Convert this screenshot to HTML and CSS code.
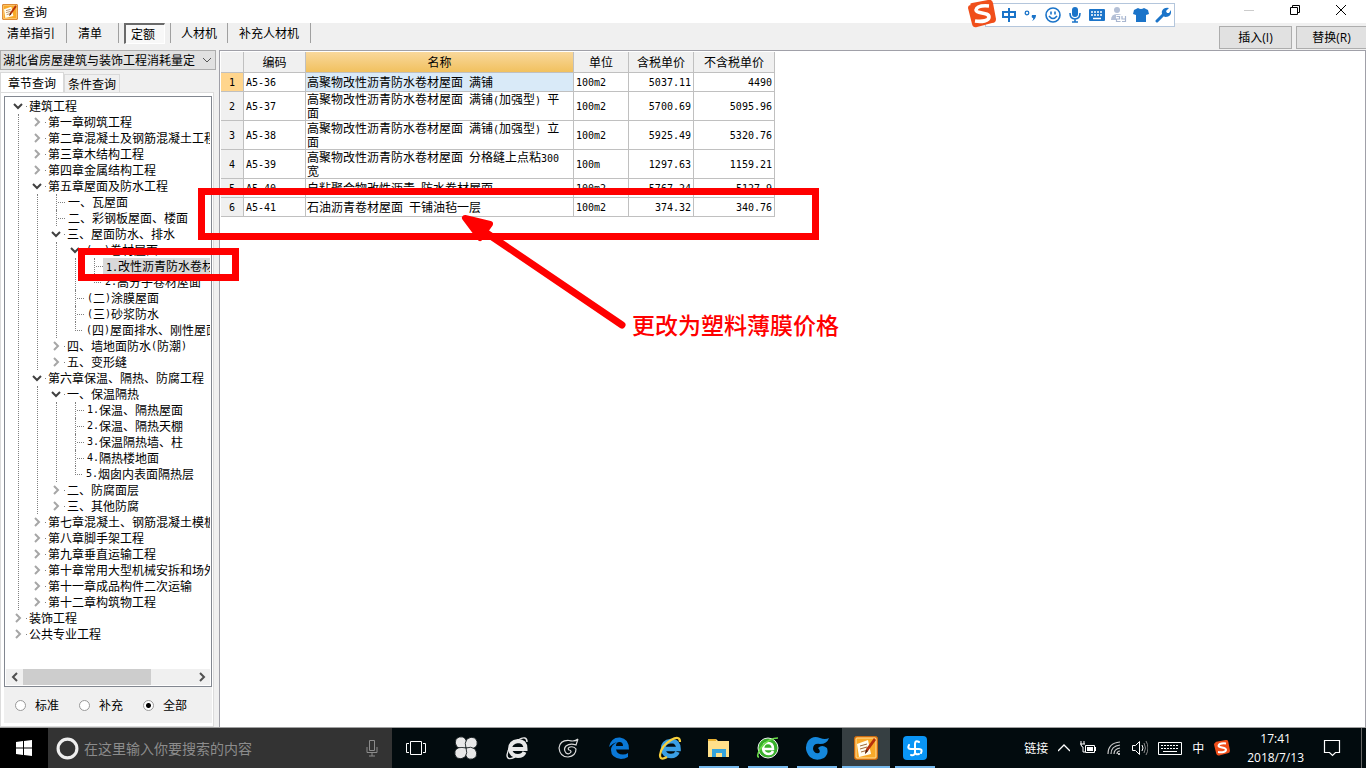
FILE: index.html
```html
<!DOCTYPE html>
<html lang="zh-CN">
<head>
<meta charset="utf-8">
<title>查询</title>
<link rel="stylesheet" href="styles.css">
</head>
<body>
<svg class="defs" aria-hidden="true">
  <symbol id="chev-down" viewBox="0 0 10 10"><path d="M1 3l4 4 4-4" fill="none" stroke="#404040" stroke-width="2"/></symbol>
  <symbol id="chev-right" viewBox="0 0 10 10"><path d="M3 1l4 4-4 4" fill="none" stroke="#a6a6a6" stroke-width="2"/></symbol>
  <symbol id="note" viewBox="0 0 24 24">
    <rect x=".5" y=".5" width="23" height="23" rx="2" fill="#e87f10" stroke="#c86a10"/>
    <rect x="2" y="2" width="20" height="20" rx="1" fill="#f9a928" stroke="#ffe09a"/>
    <path d="M3 8l11-4 3 14-12 3z" fill="#fffdf0"/>
    <path d="M6 10l7-2M6 13l7-2M7 16l7-2" stroke="#a06a3a" stroke-width="1"/>
    <path d="M20 2l2 2-8 11-3 3 1-5z" fill="#b5300c"/><path d="M11 18l1-4 2 1z" fill="#40200a"/>
  </symbol>
  <symbol id="sogou" viewBox="0 0 28 28">
    <path d="M3 5Q1 4 4 3L20 0q4-1 5 3l3 16q0 4-4 4L9 27q-4 1-5-3L0 8q0-3 3-3z" fill="#f04e1a"/>
    <path d="M21 6Q9 5 8 10c0 4 13 2 13 7 0 4-7 5-14 4" fill="none" stroke="#fff" stroke-width="3.6"/>
  </symbol>
</svg>

<header class="titlebar">
  <svg class="app-icon"><use href="#note"/></svg>
  <h1>查询</h1>
  <div class="window-buttons">
    <button aria-label="最小化"><svg viewBox="0 0 12 12"><path d="M1 6.500h10" stroke="#ccc"/></svg></button>
    <button aria-label="还原"><svg viewBox="0 0 12 12"><path d="M1.500 3.500h7v7h-7zM3.500 3V1.500h7v7H9" fill="none" stroke="#000"/></svg></button>
    <button aria-label="关闭"><svg viewBox="0 0 12 12"><path d="M1 1l10 10M11 1L1 11" stroke="#000"/></svg></button>
  </div>
</header>

<div class="ime" role="toolbar" aria-label="输入法">
  <svg class="ime-logo"><use href="#sogou"/></svg>
  <button aria-label="中文"><svg viewBox="0 0 16 16"><path d="M2 5h12v5H2zM8 1v14" fill="none" stroke="#1b74c9" stroke-width="2"/></svg></button>
  <button aria-label="标点"><svg viewBox="0 0 16 16"><circle cx="4" cy="6" r="1.800" fill="none" stroke="#1b74c9" stroke-width="1.300"/><path d="M9 8h4q0 4-4 6 2-2 1-3-2 0-1-3z" fill="#1b74c9"/></svg></button>
  <button aria-label="表情"><svg viewBox="0 0 16 16"><circle cx="8" cy="8" r="7" fill="none" stroke="#1b74c9" stroke-width="1.600"/><path d="M6 4.500v3M10 4.500v3M4 9q4 5 8 0" fill="none" stroke="#1b74c9" stroke-width="1.600"/></svg></button>
  <button aria-label="语音"><svg viewBox="0 0 16 16"><rect x="5" y="0" width="6" height="10" rx="3" fill="#1b74c9"/><path d="M3 6q0 6 5 6t5-6M8 12v3M5 15h6" fill="none" stroke="#1b74c9" stroke-width="1.600"/></svg></button>
  <button aria-label="软键盘"><svg viewBox="0 0 16 16"><rect y="2" width="16" height="12" rx="1" fill="#1b74c9"/><path d="M2 5h12M2 8h12" stroke="#fff" stroke-width="1.600" stroke-dasharray="2 1"/><path d="M4 11.500h8" stroke="#fff" stroke-width="1.500"/></svg></button>
  <button aria-label="账号"><svg viewBox="0 0 16 16"><circle cx="6" cy="3" r="3" fill="#b4c0d6"/><path d="M0 13q0-6 6-6 5 0 6 3v3z" fill="#b4c0d6"/><rect x="5" y="8" width="11" height="8" fill="#fff"/><path d="M5.500 9.500h3v2.500h-3v2.500h4M11 9v3h3.500V9v5.500H11" fill="none" stroke="#a8b6d0" stroke-width="1.200"/></svg></button>
  <button aria-label="皮肤"><svg viewBox="0 0 16 16"><path d="M5 1q3 2 6 0l4 2 1 4-3 1v7H3V8L0 7l1-4z" fill="#1b74c9"/></svg></button>
  <button aria-label="工具"><svg viewBox="0 0 16 16"><path d="M2 14l7-7" stroke="#1b74c9" stroke-width="3" stroke-linecap="round"/><path d="M14 1l-3 3 1 2 2 0 2-3q1 7-6 7-4-2-3-6 2-4 7-3z" fill="#1b74c9"/></svg></button>
</div>

<nav class="toolbar">
  <button>清单指引</button>
  <button class="list">清单</button>
  <button class="pressed" aria-pressed="true">定额</button>
  <button>人材机</button>
  <button>补充人材机</button>
  <div class="actions">
    <button>插入<span class="latin">(I)</span></button>
    <button>替换<span class="latin">(R)</span></button>
  </div>
</nav>

<main>
  <aside>
    <div class="library">
      <select aria-label="定额库"><option>湖北省房屋建筑与装饰工程消耗量定</option></select>
      <svg viewBox="0 0 10 10"><path d="M1 3l4 4 4-4" fill="none" stroke="#555"/></svg>
    </div>
    <div class="tabs" role="tablist">
      <button role="tab" aria-selected="true" class="active">章节查询</button>
      <button role="tab" aria-selected="false">条件查询</button>
    </div>
    <div class="tab-page">
      <div class="tree-box">
        <ul class="tree">
          <li><div class="row"><svg><use href="#chev-down"/></svg>建筑工程</div>
            <ul>
              <li><div class="row"><svg><use href="#chev-right"/></svg>第一章砌筑工程</div></li>
              <li><div class="row"><svg><use href="#chev-right"/></svg>第二章混凝土及钢筋混凝土工程</div></li>
              <li><div class="row"><svg><use href="#chev-right"/></svg>第三章木结构工程</div></li>
              <li><div class="row"><svg><use href="#chev-right"/></svg>第四章金属结构工程</div></li>
              <li><div class="row"><svg><use href="#chev-down"/></svg>第五章屋面及防水工程</div>
                <ul>
                  <li><div class="row leaf">一、瓦屋面</div></li>
                  <li><div class="row leaf">二、彩钢板屋面、楼面</div></li>
                  <li><div class="row"><svg><use href="#chev-down"/></svg>三、屋面防水、排水</div>
                    <ul>
                      <li><div class="row"><svg><use href="#chev-down"/></svg><span class="m">(</span>一<span class="m">)</span>卷材屋面</div>
                        <ul>
                          <li><div class="row leaf selected"><span class="label"><span class="m">1.</span>改性沥青防水卷材</span></div></li>
                          <li><div class="row leaf"><span class="m">2.</span>高分子卷材屋面</div></li>
                        </ul>
                      </li>
                      <li><div class="row leaf"><span class="m">(</span>二<span class="m">)</span>涂膜屋面</div></li>
                      <li><div class="row leaf"><span class="m">(</span>三<span class="m">)</span>砂浆防水</div></li>
                      <li><div class="row leaf"><span class="m">(</span>四<span class="m">)</span>屋面排水、刚性屋面</div></li>
                    </ul>
                  </li>
                  <li><div class="row"><svg><use href="#chev-right"/></svg>四、墙地面防水<span class="m">(</span>防潮<span class="m">)</span></div></li>
                  <li><div class="row"><svg><use href="#chev-right"/></svg>五、变形缝</div></li>
                </ul>
              </li>
              <li><div class="row"><svg><use href="#chev-down"/></svg>第六章保温、隔热、防腐工程</div>
                <ul>
                  <li><div class="row"><svg><use href="#chev-down"/></svg>一、保温隔热</div>
                    <ul>
                      <li><div class="row leaf"><span class="m">1.</span>保温、隔热屋面</div></li>
                      <li><div class="row leaf"><span class="m">2.</span>保温、隔热天棚</div></li>
                      <li><div class="row leaf"><span class="m">3.</span>保温隔热墙、柱</div></li>
                      <li><div class="row leaf"><span class="m">4.</span>隔热楼地面</div></li>
                      <li><div class="row leaf"><span class="m">5.</span>烟囱内表面隔热层</div></li>
                    </ul>
                  </li>
                  <li><div class="row"><svg><use href="#chev-right"/></svg>二、防腐面层</div></li>
                  <li><div class="row"><svg><use href="#chev-right"/></svg>三、其他防腐</div></li>
                </ul>
              </li>
              <li><div class="row"><svg><use href="#chev-right"/></svg>第七章混凝土、钢筋混凝土模板</div></li>
              <li><div class="row"><svg><use href="#chev-right"/></svg>第八章脚手架工程</div></li>
              <li><div class="row"><svg><use href="#chev-right"/></svg>第九章垂直运输工程</div></li>
              <li><div class="row"><svg><use href="#chev-right"/></svg>第十章常用大型机械安拆和场外</div></li>
              <li><div class="row"><svg><use href="#chev-right"/></svg>第十一章成品构件二次运输</div></li>
              <li><div class="row"><svg><use href="#chev-right"/></svg>第十二章构筑物工程</div></li>
            </ul>
          </li>
          <li><div class="row"><svg><use href="#chev-right"/></svg>装饰工程</div></li>
          <li><div class="row"><svg><use href="#chev-right"/></svg>公共专业工程</div></li>
        </ul>
        <div class="scrollbar">
          <button aria-label="向左"><svg viewBox="0 0 10 10"><path d="M7 1L3 5l4 4" fill="none" stroke="#505050" stroke-width="2"/></svg></button>
          <div class="track"><div class="thumb"></div></div>
          <button aria-label="向右"><svg viewBox="0 0 10 10"><path d="M3 1l4 4-4 4" fill="none" stroke="#505050" stroke-width="2"/></svg></button>
        </div>
      </div>
      <div class="radios">
        <label><input type="radio" name="scope">标准</label>
        <label><input type="radio" name="scope">补充</label>
        <label><input type="radio" name="scope" checked>全部</label>
      </div>
    </div>
  </aside>

  <section class="results">
    <table>
      <colgroup><col class="c-index"><col class="c-code"><col class="c-name"><col class="c-unit"><col class="c-tax"><col class="c-net"></colgroup>
      <thead>
        <tr><th></th><th>编码</th><th class="current">名称</th><th>单位</th><th>含税单价</th><th>不含税单价</th></tr>
      </thead>
      <tbody>
        <tr class="current"><th>1</th><td>A5-36</td><td class="name">高聚物改性沥青防水卷材屋面<span class="m"> </span>满铺</td><td>100m2</td><td class="num">5037.11</td><td class="num">4490</td></tr>
        <tr><th>2</th><td>A5-37</td><td class="name">高聚物改性沥青防水卷材屋面<span class="m"> </span>满铺<span class="m">(</span>加强型<span class="m">) </span>平<br>面</td><td>100m2</td><td class="num">5700.69</td><td class="num">5095.96</td></tr>
        <tr><th>3</th><td>A5-38</td><td class="name">高聚物改性沥青防水卷材屋面<span class="m"> </span>满铺<span class="m">(</span>加强型<span class="m">) </span>立<br>面</td><td>100m2</td><td class="num">5925.49</td><td class="num">5320.76</td></tr>
        <tr><th>4</th><td>A5-39</td><td class="name">高聚物改性沥青防水卷材屋面<span class="m"> </span>分格缝上点粘<span class="m">300</span><br>宽</td><td>100m</td><td class="num">1297.63</td><td class="num">1159.21</td></tr>
        <tr><th>5</th><td>A5-40</td><td class="name">自粘聚合物改性沥青<span class="m"> </span>防水卷材屋面</td><td>100m2</td><td class="num">5767.24</td><td class="num">5127.9</td></tr>
        <tr><th>6</th><td>A5-41</td><td class="name">石油沥青卷材屋面<span class="m"> </span>干铺油毡一层</td><td>100m2</td><td class="num">374.32</td><td class="num">340.76</td></tr>
      </tbody>
    </table>
  </section>
</main>

<footer class="taskbar">
  <button class="start" aria-label="开始"><svg viewBox="0 0 16 16"><path d="M0 2l7-1v6.500H0zM8 1l8-1v7.500H8zM0 8.500h7V15l-7-1zM8 8.500h8V16l-8-1z" fill="#fff"/></svg></button>
  <div class="search">
    <svg class="cortana" viewBox="0 0 22 22"><circle cx="11" cy="11" r="9" fill="none" stroke="#eee" stroke-width="3"/></svg>
    <input type="text" placeholder="在这里输入你要搜索的内容" aria-label="搜索">
    <svg class="mic" viewBox="0 0 12 18"><path d="M3.500 1.500h5v10h-5zM1 8v5.500h10V8M6 14v3M3 17h6" fill="none" stroke="#8c8c8c"/></svg>
  </div>
  <div class="pinned">
    <button aria-label="任务视图"><svg viewBox="0 0 24 24"><path d="M6.500 5.500h11v13h-11zM5 7.500H2.500v9H5M19 7.500h2.500v9H19" fill="none" stroke="#fff"/></svg></button>
    <button aria-label="四叶"><svg viewBox="0 0 24 24"><g fill="#e8e8e8" stroke="#020a0c" stroke-width=".8"><path id="petal" d="M12 12Q7 14 3 11 0 7 2 3 5 0 9 1 14 3 12 12z"/><use href="#petal" transform="rotate(90 12 12)"/><use href="#petal" transform="rotate(180 12 12)"/><use href="#petal" transform="rotate(270 12 12)"/></g></svg></button>
    <button aria-label="浏览器"><svg viewBox="0 0 24 24"><path d="M5 13h15.500q0-8-7.500-8-8 1-8 8 1 7 8 7 5 0 6.500-4" fill="none" stroke="#e8e8e8" stroke-width="4"/><path d="M22 6q0-7-9-2Q3 10 2 19q0 6 8 2" fill="none" stroke="#e8e8e8" stroke-width="1.400"/></svg></button>
    <button aria-label="旋风"><svg viewBox="0 0 24 24"><path d="M22 3q-3 3-9 1.500Q4 4 3 12q1 9 9 9 8-1 8-8-2-3-6-2-3 1-1 3 2 0 2 2-2 3-5 1-3-4 0-7 4-3 10-1 1-3 2-6" fill="none" stroke="#ddd" stroke-width="1.200"/></svg></button>
    <button aria-label="Edge"><svg viewBox="0 0 24 24"><path d="M2 11Q4 1 13 1.500q9 1 9 12H9q1 5 7 5 3 0 5-1.500v4q-3 2-7 2-10-1-10-9 0-5 6-8-4 1-8 5zm7-1h7q0-4-3.500-4T9 10z" fill="#0a78d7"/></svg></button>
    <button aria-label="IE"><svg viewBox="0 0 24 24"><path d="M5 13h15.500q0-8-7.500-8-8 1-8 8 1 7 8 7 5 0 6.500-4" fill="none" stroke="#3a9fe4" stroke-width="4.600"/><path d="M22 6q0-7-9-2Q3 10 2 19q0 6 7 2" fill="none" stroke="#f8cf3a" stroke-width="2.200"/></svg></button>
  </div>
  <div class="running">
    <button aria-label="文件管理器"><svg viewBox="0 0 24 24"><path d="M1 3h8l2 2h11v16H1z" fill="#ffe08a"/><path d="M1 3h8v2H1z" fill="#e8b030"/><path d="M5 21v-8h14v8h-4v-4H9v4z" fill="#35a4dc"/></svg></button>
    <button aria-label="安全浏览器"><svg viewBox="0 0 24 24"><circle cx="12" cy="12" r="10" fill="#38b02c" stroke="#eee"/><path d="M7 13h10q0-6-5-6t-5 6q1 5 6 5 3 0 4-3" fill="none" stroke="#fff" stroke-width="2.500"/><path d="M22 2Q12 2 4 13q-4 8-1 8" fill="none" stroke="#6adf4a" stroke-width="1.600"/></svg></button>
    <button aria-label="广联达"><svg viewBox="0 0 24 24"><path d="M24 2q-2 6-9 6-7-1-7 5 1 5 6 4 2-2-1-5 4-4 9 0 2 6-3 10-8 4-14-1Q-2 13 3 5 8-1 15 2q5 2 9 0z" fill="#1588dc"/></svg></button>
    <button aria-label="查询" class="active"><svg><use href="#note"/></svg></button>
    <button aria-label="工具箱"><svg viewBox="0 0 24 24"><rect width="24" height="24" rx="4" fill="#0a95f5"/><path d="M16 6q-4-2-4 2v8q0 4-4 3M6 9q-2 4 2 4h8q4 0 2 4M12 16q0 3 4 2" fill="none" stroke="#fff" stroke-width="2" stroke-linecap="round"/></svg></button>
  </div>
  <div class="tray">
    <span>链接</span>
    <svg class="s12" viewBox="0 0 12 12"><path d="M0 9l6-6 6 6" fill="none" stroke="#fff" stroke-width="1.300"/></svg>
    <svg class="s16" viewBox="0 0 16 16"><path d="M5.500 5.500h9v7h-9zM15.500 7v4M0 4h5M1 1v3M4 1v3M1 4q0 3 2 3v5h2" fill="none" stroke="#fff"/><path d="M7 7h6v4H7z" fill="#fff"/></svg>
    <svg class="s16" viewBox="0 0 16 16"><path d="M2 14Q2 3 14 2M5 14q0-8 9-9M8 14q0-5 6-6M11 14q0-3 3-3" fill="none" stroke="#ccc" stroke-width="1.200"/><circle cx="13" cy="14" r="1" fill="#fff"/></svg>
    <svg class="s16" viewBox="0 0 16 16"><path d="M.5 5.500h3l4-4v13l-4-4h-3zM10 5q2 3 0 6" fill="none" stroke="#fff"/><path d="M12 3q3 5 0 10M14 1q4 7 0 14" fill="none" stroke="#888"/></svg>
    <svg class="s24" viewBox="0 0 24 16"><path d="M.5 2.500h23v12H.5z" fill="none" stroke="#fff"/><path d="M3 5.500h18M3 8.500h18" stroke="#fff" stroke-dasharray="2 1"/><path d="M5 11.500h14" stroke="#fff"/></svg>
    <span>中</span>
    <svg class="s16"><use href="#sogou"/></svg>
    <time>17:41<br>2018/7/13</time>
    <svg class="s18" viewBox="0 0 18 18"><path d="M1.500 1.500h15v12h-4l-3 3-3-3h-5z" fill="none" stroke="#fff" stroke-width="1.200"/></svg>
  </div>
</footer>

<svg class="markup" role="img" aria-label="批注">
  <g fill="none" stroke="#f00" stroke-width="7">
    <rect x="201.500" y="191.500" width="614" height="45"/>
    <rect x="81.500" y="251.500" width="154" height="26"/>
    <path d="M482 230L622 325" stroke-linecap="round"/>
  </g>
  <path d="M465 218L490 224 480 238z" fill="#f00" stroke="#f00" stroke-width="6" stroke-linejoin="round"/>
</svg>
<p class="remark">更改为塑料薄膜价格</p>
</body>
</html>
```

FILE: styles.css
```css
* { box-sizing: border-box; }
body {
  margin: 0;
  height: 100vh;
  display: flex;
  flex-direction: column;
  overflow: hidden;
  position: relative;
  background: #f0f0f0;
  color: #000;
  font: 12px/16px "Noto Sans CJK SC", sans-serif;
}
button, input, select { font: inherit; color: inherit; margin: 0; padding: 0; border: 0; background: none; }
ul { list-style: none; margin: 0; padding: 0; }
.defs { position: absolute; width: 0; height: 0; }
.m { font: 10px/1 "DejaVu Sans Mono", monospace; white-space: pre; }

/* Title bar */
.titlebar { display: flex; align-items: center; height: 23px; flex: none; padding-left: 2px; gap: 5px; background: #fff; }
.titlebar h1 { margin: 0; font-size: 12px; font-weight: 400; }
.app-icon { width: 16px; height: 16px; }
.window-buttons { margin-left: auto; display: flex; align-self: flex-start; padding-right: 2px; }
.window-buttons button { width: 46px; height: 20px; display: grid; place-items: center; }
.window-buttons svg { width: 12px; height: 12px; }

.ime {
  position: absolute; z-index: 2; top: 3px; right: 191px;
  display: flex; align-items: center; height: 24px; padding: 0 0 0 12px;
  background: #fff; border: 1px solid #b4c6dc;
}
.ime-logo { position: absolute; left: -18px; top: -4px; width: 28px; height: 28px; }
.ime button { width: 22px; height: 22px; display: grid; place-items: center; }
.ime button svg { width: 16px; height: 16px; }

/* Toolbar */
.toolbar { display: flex; flex: none; height: 27px; align-items: flex-start; }
.toolbar > button { height: 20px; padding: 0 11px; border-right: 1px solid #a0a0a0; }
.toolbar > button:first-child { padding-left: 7px; }
.toolbar > .list { padding-right: 16px; }
.toolbar > .pressed {
  margin: 0 5px; padding: 0 9px 0 5px; height: 21px;
  background: #f8f8f8; border: 1px solid #fff; border-top: 2px solid #6a6a6a; border-left: 2px solid #6a6a6a;
}
.toolbar > .pressed + button { border-left: 1px solid #a0a0a0; padding: 0 10px; }
.actions { display: flex; gap: 4px; margin-left: auto; padding-top: 3px; }
.actions button { width: 73px; height: 23px; background: #e1e1e1; border: 1px solid #adadad; }
.actions button:last-child { width: 70px; border-right: 0; }
.latin { font-family: "Open Sans", sans-serif; }

main { flex: 1; min-height: 0; display: flex; border-bottom: 1px solid #a0a0a0; }

/* Sidebar */
aside { width: 219px; flex: none; display: flex; flex-direction: column; padding-right: 5px; }
.library { position: relative; height: 20px; margin-right: -2px; flex: none; }
.library select { width: 100%; height: 20px; padding: 0 18px 0 2px; appearance: none; background: #e1e1e1; border: 1px solid #adadad; border-radius: 0; }
.library svg { position: absolute; right: 4px; top: 5px; width: 10px; height: 10px; pointer-events: none; }
.tabs { display: flex; align-items: flex-end; height: 22px; flex: none; }
.tabs button { height: 18px; width: 56px; border: 1px solid #d9d9d9; border-bottom: 0; }
.tabs .active { height: 20px; width: 64px; background: #fff; }
.tab-page { flex: 1; min-height: 0; display: flex; flex-direction: column; background: #fff; border: 1px solid #dcdcdc; padding: 3px 1px 3px 3px; }
.tree-box { flex: 1; min-height: 0; display: flex; flex-direction: column; border: 1px solid #828790; padding: 1px; }
.tree { flex: 1; min-height: 0; overflow: hidden; padding-left: 7px; white-space: nowrap; }
.tree ul { margin-left: 5px; padding-left: 13px; border-left: 1px dotted #808080; }
.row { display: flex; align-items: center; height: 16px; }
.row > svg { width: 10px; height: 10px; margin-right: 6px; flex: none; }
.row .m { line-height: 16px; }
.row:not(.leaf) { background: linear-gradient(#808080, #808080) 13px 8px / 1px 1px no-repeat; }
.leaf::before {
  content: ""; flex: none; width: 8px; height: 16px; margin: 0 3px 0 5px;
  border-left: 1px dotted #808080;
  background: repeating-linear-gradient(90deg, transparent 0 1px, #808080 1px 2px) 0 8px / 8px 1px no-repeat;
}
li:last-child > .leaf::before { border-left: 0; background: repeating-linear-gradient(90deg, #808080 0 1px, transparent 1px 2px) 0 8px / 8px 1px no-repeat, repeating-linear-gradient(#808080 0 1px, transparent 1px 2px) 0 0 / 1px 8px no-repeat; }
.selected::before { margin-right: 0; }
.label { flex: 1; height: 16px; padding-left: 3px; background: #d9d9d9; }
.scrollbar { display: flex; height: 16px; flex: none; background: #f0f0f0; }
.scrollbar button { width: 17px; display: grid; place-items: center; }
.scrollbar svg { width: 10px; height: 10px; }
.track { flex: 1; }
.thumb { width: 75%; height: 100%; background: #cdcdcd; }
.radios { display: flex; gap: 16px; height: 36px; flex: none; align-items: center; padding-left: 10px; background: #f0f0f0; }
.radios label { display: flex; align-items: center; gap: 6px; width: 48px; padding-left: 1px; }
.radios input { appearance: none; width: 11px; height: 11px; margin-right: 3px; border: 1px solid #999; border-radius: 50%; background: #fff; }
.radios input:checked { background: radial-gradient(#000 0 2px, #fff 3px); }

/* Results grid */
.results { flex: 1; min-width: 0; background: #fff; border: 1px solid #a0a0a8; border-bottom: 0; padding: 1px; }
table { table-layout: fixed; width: 554px; border-collapse: separate; border-spacing: 0; }
.c-index { width: 23px; } .c-code { width: 62px; } .c-name { width: 268px; }
.c-unit { width: 55px; } .c-tax { width: 65px; } .c-net { width: 81px; }
th, td { height: 19px; padding: 2px 2px 0; border: solid #c0c0c0; border-width: 0 1px 1px 0; white-space: nowrap; font: 10px/12px "DejaVu Sans Mono", monospace; text-align: left; vertical-align: middle; }
th { background: #f0f0f0; padding: 2px 0 0; text-align: center; }
thead th { height: 21px; padding: 0; font: 12px/16px "Noto Sans CJK SC", sans-serif; }
thead .current { background: linear-gradient(#f9d89c, #f1c15f); }
tbody .current th { background: #ffd58d; }
td.name { padding: 0 1px; font: 12px/14px "Noto Sans CJK SC", sans-serif; }
.name .m { line-height: 1px; }
.current .name { background: #d9eaf8; }
td.num { text-align: right; }

/* Taskbar */
.taskbar { display: flex; height: 40px; flex: none; background: #020b0e; color: #fff; }
.taskbar button { display: grid; place-items: center; height: 40px; }
.taskbar .start { width: 48px; background: #000; }
.start svg { width: 16px; height: 16px; }
.search { width: 344px; display: flex; align-items: center; background: #333; padding: 0 14px 0 8px; gap: 5px; }
.search input { flex: 1; min-width: 0; height: 32px; font-size: 14px; }
.search input::placeholder { color: #8c8c8c; opacity: 1; }
.cortana { width: 23px; height: 23px; }
.mic { width: 12px; height: 18px; }
.pinned, .running { display: flex; gap: 1px; }
.pinned button { width: 50px; }
.pinned button:first-child { width: 48px; }
.pinned button:last-child { width: 50px; }
.pinned svg, .running svg { width: 24px; height: 24px; }
.running button { width: 48px; background: linear-gradient(#76b9ed, #76b9ed) center bottom / 40px 2px no-repeat; }
.running .active { background: linear-gradient(#76b9ed, #76b9ed) center bottom / 48px 2px no-repeat #363f42; }
.tray { margin-left: auto; display: flex; align-items: center; gap: 10px; margin-right: 4px; padding-right: 20px; border-right: 1px solid #666; }
.tray svg { flex: none; height: 16px; width: 16px; }
.tray .s12 { width: 12px; height: 12px; }
.tray .s24 { width: 24px; }
.tray .s18 { width: 18px; height: 18px; }
.tray time { font: 12px/19px "Open Sans", sans-serif; text-align: center; padding: 0 9px 0 7px; }

/* Annotations drawn over the window */
.markup { position: absolute; z-index: 3; inset: 0; width: 100%; height: 100%; pointer-events: none; }
.remark { position: absolute; z-index: 3; left: 632px; top: 309px; margin: 0; color: #f00; font-size: 23px; font-weight: 500; line-height: 30px; }
```
